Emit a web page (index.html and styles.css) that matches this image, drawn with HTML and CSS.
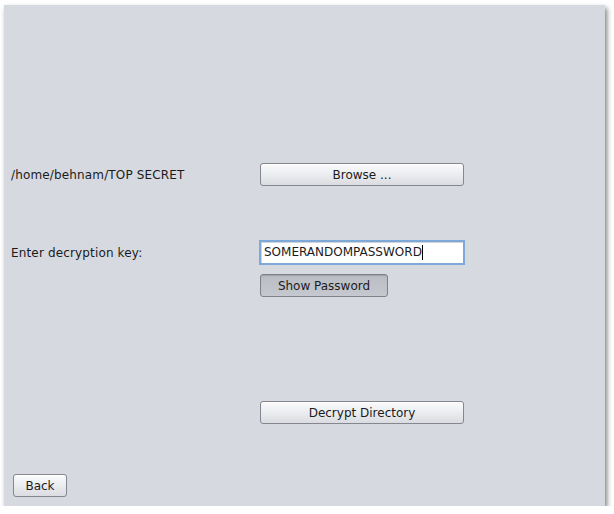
FILE: index.html
```html
<!DOCTYPE html>
<html>
<head>
<meta charset="utf-8">
<link rel="stylesheet" href="styles.css">
</head>
<body>
<div class="window">
  <div class="row row-browse">
    <span class="label">/home/behnam/TOP SECRET</span>
    <button class="btn btn-wide">Browse ...</button>
  </div>
  <div class="row row-key">
    <span class="label label-key">Enter decryption key:</span>
    <div class="field"><span class="caret">SOMERANDOMPASSWORD</span></div>
  </div>
  <div class="row row-show">
    <button class="btn btn-toggle">Show Password</button>
  </div>
  <div class="row row-decrypt">
    <button class="btn btn-wide">Decrypt Directory</button>
  </div>
  <div class="row row-back">
    <button class="btn btn-back">Back</button>
  </div>
</div>
</body>
</html>
```
FILE: styles.css
```css
html, body {
  margin: 0;
  padding: 0;
  background: #ffffff;
}
body {
  font-family: "DejaVu Sans", sans-serif;
  font-size: 12px;
  color: #1b1b1b;
}
.window {
  margin: 5px 0 0 4px;
  width: 601px;
  height: 501px;
  background: #d6d9e0;
  box-shadow: 2px 3px 5px rgba(0,0,0,0.5);
  display: flex;
  flex-direction: column;
}
.row {
  display: flex;
  align-items: center;
}
.label {
  width: 256px;
  box-sizing: border-box;
  padding-left: 7px;
  white-space: nowrap;
  letter-spacing: 0.15px;
}
.label-key {
  width: 255px;
}
.row-browse { margin-top: 158px; height: 23px; }
.row-key { margin-top: 54px; height: 25px; }
.row-show { margin-top: 9px; padding-left: 256px; }
.row-decrypt { margin-top: 104px; padding-left: 256px; }
.row-back { margin-top: 50px; padding-left: 9px; }
.btn {
  font-family: "DejaVu Sans", sans-serif;
  font-size: 12px;
  color: #1b1b1b;
  height: 23px;
  padding: 0;
  border: 1px solid #84878d;
  border-radius: 3px;
  background: linear-gradient(#fbfbfc 0%, #eceef1 45%, #dadce1 100%);
  box-shadow: inset 0 1px 0 #ffffff;
}
.btn-wide { width: 204px; }
.btn-back { width: 54px; }
.btn-toggle {
  width: 128px;
  background: linear-gradient(#b9bcc3, #c5c8ce);
  border-color: #7f8288;
  box-shadow: inset 0 1px 1px rgba(0,0,0,0.15);
}
.field {
  width: 206px;
  height: 25px;
  box-sizing: border-box;
  border: 2px solid #7ea8d8;
  background: #ffffff;
  display: flex;
  align-items: center;
  padding-left: 3px;
  box-shadow: inset 1px 1px 0 #d0d4da;
}
.caret {
  border-right: 1px solid #000;
  padding-right: 0;
  line-height: 15px;
}
```
